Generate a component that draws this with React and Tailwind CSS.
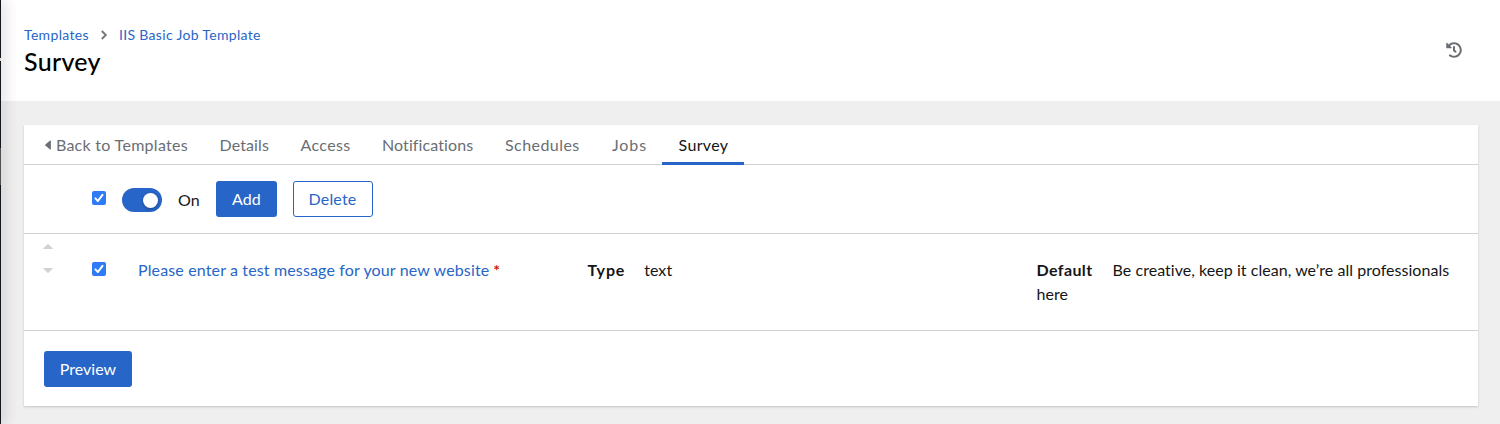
import { FaHistory } from "react-icons/fa";

const tabs = [
  { label: "Details", box: "ml-[31.5px] w-[50px] tracking-[0.12px]" },
  { label: "Access", box: "ml-[31px] w-[50px] tracking-[0.35px]" },
  { label: "Notifications", box: "ml-[31.5px] w-[92px] tracking-[0.1px]" },
  { label: "Schedules", box: "ml-[31px] w-[75px] tracking-[0.44px]" },
  { label: "Jobs", box: "ml-[32px] w-[36px] tracking-[0.9px]" },
];

function Checkbox() {
  return (
    <span role="checkbox" aria-checked="true" className="flex size-[14px] shrink-0 items-center justify-center rounded-[2px] bg-[#2f7bf6]">
      <svg viewBox="0 0 14 14" className="size-[14px]" fill="none" stroke="#fff" strokeWidth="2" strokeLinecap="round" strokeLinejoin="round">
        <path d="M3.4 7.4 5.9 10 10.5 3.8" />
      </svg>
    </span>
  );
}

export default function App() {
  return (
    <div className="relative flex h-[424px] w-[1500px] overflow-hidden bg-[#efefef] font-['Lato',sans-serif] text-base leading-6 text-[#151515]">
      <aside className="relative z-10 flex w-px shrink-0 flex-col bg-[#12161d] shadow-[0_0_14px_1px_rgba(3,3,3,0.42)]">
        <span className="mt-[58px] h-[3px] bg-[#dddddd]" />
        <span className="mt-[87px] h-[37px] bg-[#4f5255]" />
      </aside>

      <div className="flex min-w-0 flex-1 flex-col">
        <header className="flex h-[101px] shrink-0 justify-between bg-white pr-[38px] pl-[23px]">
          <div className="pt-6">
            <nav className="flex h-[21px] items-center text-sm text-[#2865c8]">
              <a className="w-[65px] tracking-[0.33px]">Templates</a>
              <svg viewBox="0 0 8 10" className="mr-[11px] ml-[11px] h-[10px] w-[8px]" fill="none" stroke="#75787b" strokeWidth="1.9">
                <path d="M1.8 1 5.8 5 1.8 9" />
              </svg>
              <a className="tracking-[0.32px] whitespace-nowrap">IIS Basic Job Template</a>
            </nav>
            <h1 className="mt-px text-[25px] leading-[31px] font-medium tracking-[0.3px] text-black">Survey</h1>
          </div>
          <FaHistory className="mt-[41.5px] size-[16px] text-[#6a6e73]" />
        </header>

        <main className="mt-6 mr-[22px] ml-[23px] flex h-[281px] flex-col bg-white shadow-[0_1px_2px_rgba(3,3,3,0.18)]">
          <div className="flex h-[40px] shrink-0 border-b border-[#d2d2d2] pl-[21px] text-[#6a6e73]">
            <a className="flex h-[40px] w-[143px] items-center gap-[5px] pb-px tracking-[0.29px] whitespace-nowrap">
              <svg viewBox="0 0 6 10" className="h-[10px] w-[6px]" fill="currentColor">
                <path d="M5.2.5Q6 0 6 .9v8.2q0 .9-.8.4L.4 5.5Q0 5 .4 4.5Z" />
              </svg>
              Back to Templates
            </a>
            {tabs.map((t) => (
              <a key={t.label} className={`flex h-[40px] items-center pb-px whitespace-nowrap ${t.box}`}>{t.label}</a>
            ))}
            <a className="ml-[14px] flex h-[40px] w-[82px] items-center justify-center border-b-[3px] border-[#2865c8] pt-0.5 pl-px tracking-[0.35px] text-[#151515]">
              Survey
            </a>
          </div>

          <div className="flex h-[69px] shrink-0 items-center border-b border-[#d2d2d2] pl-[68px]">
            <div className="-mt-0.5">
              <Checkbox />
            </div>
            <span role="switch" aria-checked="true" className="mt-[2px] ml-4 flex h-6 w-10 items-center justify-end rounded-full bg-[#2865c8] pr-1">
              <span className="size-[15px] rounded-full bg-white shadow-[0_1px_3px_rgba(3,3,3,0.35)]" />
            </span>
            <span className="ml-4 w-[38px] pt-px tracking-[0.2px]">On</span>
            <button className="h-9 w-[61px] rounded-[3px] bg-[#2865c8] tracking-[0.1px] text-white">Add</button>
            <button className="ml-[15.5px] h-9 w-20 rounded-[3px] border border-[#2865c8] tracking-[0.2px] text-[#2865c8]">Delete</button>
          </div>

          <div className="flex h-[97px] shrink-0 border-b border-[#d2d2d2]">
            <div className="flex w-[68px] shrink-0 flex-col gap-[19px] pt-[10px] pl-[19px]">
              <svg viewBox="0 0 10 5" className="h-[5px] w-[10px]" fill="#d2d2d2">
                <path d="M.6 5Q-.2 5 .4 4.3L4.5.3q.5-.5 1 0l4.1 4q.6.7-.2.7Z" />
              </svg>
              <svg viewBox="0 0 10 5" className="h-[5px] w-[10px]" fill="#d2d2d2">
                <path d="M.6 0Q-.2 0 .4.7l4.1 4q.5.5 1 0l4.1-4Q10.2 0 9.4 0Z" />
              </svg>
            </div>
            <div className="w-[46px] shrink-0 pt-[28px]">
              <Checkbox />
            </div>
            <div className="grid w-[1321px] grid-cols-[449.5px_449px_422px] pt-6">
              <div className="tracking-[0.14px]">
                <a className="text-[#2865c8]">Please enter a test message for your new website</a>
                <span className="ml-1 font-bold text-[#c9190b]">*</span>
              </div>
              <div>
                <b className="mr-[19px] font-bold tracking-[0.85px]">Type</b>
                <span className="tracking-[0.05px]">text</span>
              </div>
              <div className="tracking-[0.04px]">
                <b className="mr-5 font-bold tracking-[0.4px]">Default</b>
                Be creative, keep it clean, we’re all professionals here
              </div>
            </div>
          </div>

          <div className="pt-5 pl-5">
            <button className="h-9 w-[88px] rounded-[3px] bg-[#2865c8] text-white">Preview</button>
          </div>
        </main>
      </div>
    </div>
  );
}
